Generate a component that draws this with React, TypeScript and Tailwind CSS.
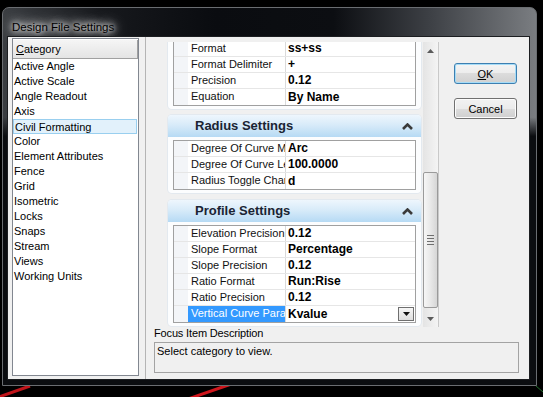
const topRows = [
  ["Format", "ss+ss"],
  ["Format Delimiter", "+"],
  ["Precision", "0.12"],
  ["Equation", "By Name"],
];

const radiusRows = [
  ["Degree Of Curve Mode", "Arc"],
  ["Degree Of Curve Length", "100.0000"],
  ["Radius Toggle Character", "d"],
];

const profileRows = [
  ["Elevation Precision", "0.12"],
  ["Slope Format", "Percentage"],
  ["Slope Precision", "0.12"],
  ["Ratio Format", "Run:Rise"],
  ["Ratio Precision", "0.12"],
  ["Vertical Curve Parameter", "Kvalue"],
];

const categories = [
  "Active Angle",
  "Active Scale",
  "Angle Readout",
  "Axis",
  "Civil Formatting",
  "Color",
  "Element Attributes",
  "Fence",
  "Grid",
  "Isometric",
  "Locks",
  "Snaps",
  "Stream",
  "Views",
  "Working Units",
];

function Row({ label, value, selected }: { label: string; value: string; selected?: boolean }) {
  return (
    <div className="flex h-[16px] border-b border-[#e6e6e6] last:border-b-0">
      <div className="w-[14px] bg-[#f3f5f8]" />
      <div
        className={`w-[98px] overflow-hidden text-clip whitespace-nowrap border-r border-[#dadada] pl-[3px] text-[11px] leading-[15px] ${
          selected ? "bg-[#3399ff] text-white" : "bg-white text-[#111]"
        }`}
      >
        {label}
      </div>
      <div className="flex flex-1 items-center justify-between bg-white pl-[2px] pr-[1px] text-[12px] font-bold leading-[15px] text-black">
        <span>{value}</span>
        {selected && (
          <span className="flex h-[14px] w-[16px] items-center justify-center border border-[#6f6f6f] bg-[linear-gradient(180deg,#f6f6f6,#dedede)]">
            <svg width="7" height="4" viewBox="0 0 7 4">
              <path d="M0 0h7L3.5 4z" fill="#111" />
            </svg>
          </span>
        )}
      </div>
    </div>
  );
}

function Table({ rows, selectLast }: { rows: string[][]; selectLast?: boolean }) {
  return (
    <div className="mx-[5px] border border-[#a0a0a0]">
      {rows.map(([l, v], i) => (
        <Row key={l} label={l} value={v} selected={selectLast && i === rows.length - 1} />
      ))}
    </div>
  );
}

function Section({ title, rows, selectLast, className }: { title: string; rows: string[][]; selectLast?: boolean; className: string }) {
  return (
    <div className={`rounded-[4px] bg-[#fcfdfe] pb-[3px] shadow-[0_0_0_1px_#e3e9ef] ${className}`}>
      <div className="flex h-[22px] items-center justify-between rounded-t-[4px] bg-[linear-gradient(180deg,#eef6fd_0%,#d8ebf9_45%,#b6daf4_100%)] pl-[27px] pr-[8px]">
        <span className="text-[13px] font-bold leading-[14px] text-[#1a2433]">{title}</span>
        <svg width="11" height="7" viewBox="0 0 11 7">
          <path d="M1 6L5.5 1.5 10 6" fill="none" stroke="#3a3a3a" strokeWidth="2.6" />
        </svg>
      </div>
      <div className="mt-[3px]">
        <Table rows={rows} selectLast={selectLast} />
      </div>
    </div>
  );
}

function Arrow({ up }: { up?: boolean }) {
  return (
    <div className="flex h-[17px] items-center justify-center">
      <svg width="7" height="4" viewBox="0 0 7 4">
        <path d={up ? "M0 4h7L3.5 0z" : "M0 0h7L3.5 4z"} fill="#5a5a5a" />
      </svg>
    </div>
  );
}

export default function App() {
  return (
    <div className="relative h-[397px] w-[543px] overflow-hidden bg-black font-['Liberation_Sans',Arial,sans-serif]">
      {/* desktop wallpaper streaks */}
      <svg className="absolute inset-0" width="543" height="397">
        <line x1="-4" y1="398" x2="30" y2="386" stroke="#c0141a" strokeWidth="3" />
        <line x1="188" y1="399" x2="240" y2="381" stroke="#d0161c" strokeWidth="3" />
        <line x1="536" y1="386" x2="543" y2="392" stroke="#1f6b2a" strokeWidth="1" />
      </svg>

      {/* window */}
      <div className="absolute left-[2px] top-[7px] flex h-[379px] w-[535px] flex-col rounded-t-[7px] border border-[#6a6d71] bg-[linear-gradient(180deg,rgba(11,13,16,0)_0%,rgba(11,13,16,0)_29%,#0b0d10_34%),linear-gradient(90deg,#3b3e42_0%,#17191d_18%,#0a0c10_40%,#0c0e12_62%,#3d4045_80%,#7a7d81_100%)] pb-[5px] pl-[4px] pr-[6px]">
        <div className="h-[28px] pl-[5px] pt-[6px]">
          <span className="text-[11.5px] leading-[14px] text-black [text-shadow:0_0_5px_#fff,0_0_9px_#fff,0_0_14px_#ddd,0_0_18px_#bbb]">
            Design File Settings
          </span>
        </div>

        {/* client area */}
        <div className="flex flex-1 border border-[#1c1e21] bg-[#f0f0f0] text-[11px] text-black">
          {/* category list */}
          <div className="mb-[3px] ml-[4px] mt-[1px] w-[127px] border border-[#828790] bg-white">
            <div className="mt-[1px] h-[19px] border-b border-r border-[#a0a0a0] bg-[linear-gradient(180deg,#f5f5f5,#e4e4e4)] pl-[3px] leading-[18px]">
              <span className="underline underline-offset-1">C</span>ategory
            </div>
            {categories.map((c) => (
              <div
                key={c}
                className={`mr-[1px] h-[15px] whitespace-nowrap pl-[1px] leading-[14px] ${
                  c === "Civil Formatting" ? "border border-[#99cfef] bg-[#e2f1fb] pl-0" : ""
                }`}
              >
                {c}
              </div>
            ))}
          </div>

          <div className="ml-[6px] w-px bg-[#b4b4b4]" />

          {/* right panel */}
          <div className="flex flex-1 flex-col">
            <div className="flex h-[290px]">
              {/* property grid with scrollbar */}
              <div className="mt-[5px] flex h-[285px] w-[293px] border-r border-[#c9c9c9]">
                <div className="w-[277px] overflow-hidden">
                  <div className="-mt-[2px] ml-[22px] w-[253px] rounded-b-[4px] bg-[#fcfdfe] pb-[3px] shadow-[0_0_0_1px_#e3e9ef]">
                    <Table rows={topRows} />
                  </div>
                  <Section title="Radius Settings" rows={radiusRows} className="ml-[22px] mt-[6px] w-[253px]" />
                  <Section title="Profile Settings" rows={profileRows} selectLast className="ml-[22px] mt-[7px] w-[253px]" />
                </div>
                <div className="flex w-[15px] flex-col bg-[linear-gradient(90deg,#e4e4e4,#f4f4f4)]">
                  <Arrow up />
                  <div className="flex-1">
                    <div className="mt-[113px] flex h-[136px] flex-col items-center justify-center gap-[2px] rounded-[2px] border border-[#9a9a9a] bg-[linear-gradient(90deg,#f6f6f6,#e8e8e8_50%,#d6d6d6)]">
                      <div className="h-px w-[7px] bg-[#6e6e6e]" />
                      <div className="h-px w-[7px] bg-[#6e6e6e]" />
                      <div className="h-px w-[7px] bg-[#6e6e6e]" />
                      <div className="h-px w-[7px] bg-[#6e6e6e]" />
                    </div>
                  </div>
                  <Arrow />
                </div>
              </div>

              {/* buttons */}
              <div className="ml-[15px] mt-[26px] flex flex-col gap-[14px]">
                <button className="h-[21px] w-[63px] rounded-[3px] border border-[#3c7fb1] bg-[linear-gradient(180deg,#f4f4f4_0%,#ececec_50%,#dcdcdc_50%,#d0d0d0_100%)] text-[11px] leading-[18px] shadow-[inset_0_0_0_1px_#a6dcf7]">
                  <span className="underline underline-offset-1">O</span>K
                </button>
                <button className="h-[21px] w-[63px] rounded-[3px] border border-[#707070] bg-[linear-gradient(180deg,#f2f2f2_0%,#ebebeb_50%,#dddddd_50%,#cfcfcf_100%)] text-[11px] leading-[18px] shadow-[inset_0_0_0_1px_#fcfcfc]">
                  Cancel
                </button>
              </div>
            </div>

            {/* focus item description */}
            <div className="ml-[8px] leading-[12px] tracking-[-0.15px]">Focus Item Description</div>
            <div className="ml-[8px] mt-[3px] h-[31px] w-[365px] border border-[#a3a3a3] pl-[2px] pt-[2px] leading-[13px]">
              Select category to view.
            </div>
          </div>
        </div>
      </div>
    </div>
  );
}
